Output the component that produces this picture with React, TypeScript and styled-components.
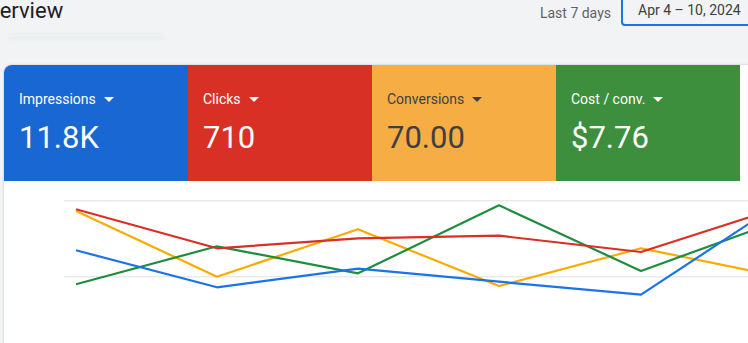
import React from 'react';
import styled, { createGlobalStyle } from 'styled-components';

const GlobalStyle = createGlobalStyle`
  html, body {
    margin: 0;
    padding: 0;
    background: #f1f3f4;
    overflow: hidden;
    font-family: Roboto, "Liberation Sans", Arial, sans-serif;
  }
`;

type Metric = {
  label: string;
  value: string;
  bg: string;
  fg: string;
};

const metrics: Metric[] = [
  { label: 'Impressions', value: '11.8K', bg: '#1967d2', fg: '#ffffff' },
  { label: 'Clicks', value: '710', bg: '#d93025', fg: '#ffffff' },
  { label: 'Conversions', value: '70.00', bg: '#f6ad44', fg: '#3c4043' },
  { label: 'Cost / conv.', value: '$7.76', bg: '#3d8f3e', fg: '#ffffff' },
];

const xs = [72, 213, 354, 495, 637, 778];
const series = [
  { color: '#f9ab00', ys: [30, 95.7, 48.3, 105, 67.3, 95.9] },
  { color: '#1e8e3e', ys: [103.3, 65.3, 92.3, 24.3, 90, 38.7] },
  { color: '#1a73e8', ys: [69.3, 106.3, 87.7, 100.7, 113.7, 20.9] },
  { color: '#d93025', ys: [28.3, 67.3, 57.3, 54.7, 71, 25.8] },
];

export default function App() {
  return (
    <>
      <GlobalStyle />
      <Page>
        <Header>
          <Title>Overview</Title>
          <DateControls>
            <RangeLabel>Last 7 days</RangeLabel>
            <DateButton>Apr 4 – 10, 2024</DateButton>
          </DateControls>
        </Header>
        <TabShadow />
        <Card>
          <Tiles>
            {metrics.map((m) => (
              <Tile key={m.label} bg={m.bg} fg={m.fg}>
                <TileLabel>
                  {m.label}
                  <Caret fg={m.fg} />
                </TileLabel>
                <TileValue>{m.value}</TileValue>
              </Tile>
            ))}
          </Tiles>
          <Chart width="800" height="200" viewBox="0 0 800 200">
            <line x1="60" y1="19.7" x2="800" y2="19.7" stroke="#e8eaed" strokeWidth="1.5" />
            <line x1="60" y1="95.7" x2="800" y2="95.7" stroke="#e8eaed" strokeWidth="1.5" />
            {series.map((s) => (
              <polyline
                key={s.color}
                points={s.ys.map((y, i) => `${xs[i]},${y}`).join(' ')}
                fill="none"
                stroke={s.color}
                strokeWidth="2.2"
                strokeLinejoin="round"
              />
            ))}
          </Chart>
        </Card>
      </Page>
    </>
  );
}

const Page = styled.div`
  display: flex;
  flex-direction: column;
  width: 820px;
  margin-top: -10px;
`;

const Header = styled.div`
  display: flex;
  align-items: flex-end;
  justify-content: space-between;
  height: 36px;
`;

const Title = styled.h1`
  margin: 0 0 2px -26px;
  font-size: 22px;
  font-weight: 400;
  color: #202124;
  line-height: 26px;
`;

const DateControls = styled.div`
  display: flex;
  align-items: center;
  gap: 10px;
  height: 36px;
  padding-left: 100px;
`;

const RangeLabel = styled.span`
  font-size: 14px;
  color: #5f6368;
  padding-top: 10px;
`;

const DateButton = styled.div`
  box-sizing: border-box;
  height: 36px;
  width: 199px;
  padding: 10px 0 0 15px;
  border: 2px solid #1a73e8;
  border-radius: 4px;
  font-size: 14px;
  color: #3c4043;
  background: #f1f3f4;
`;

const TabShadow = styled.div`
  width: 155px;
  height: 1px;
  margin: 9px 0 0 10px;
  box-shadow: 0 1px 5px rgba(60, 64, 67, 0.2);
`;

const Card = styled.div`
  margin: 29px 0 0 4px;
  background: #ffffff;
  border-radius: 8px 0 0 0;
  overflow: hidden;
  box-shadow: 0 0 2px rgba(60, 64, 67, 0.35);
`;

const Tiles = styled.div`
  display: flex;
  width: 736px;
  height: 116px;
`;

const Tile = styled.div<{ bg: string; fg: string }>`
  box-sizing: border-box;
  flex: 1;
  padding: 26px 0 0 15px;
  background: ${({ bg }) => bg};
  color: ${({ fg }) => fg};
`;

const TileLabel = styled.div`
  display: flex;
  align-items: center;
  gap: 8px;
  font-size: 14px;
  line-height: 16px;
`;

const Caret = styled.span<{ fg: string }>`
  width: 0;
  height: 0;
  border-left: 5px solid transparent;
  border-right: 5px solid transparent;
  border-top: 5px solid ${({ fg }) => fg};
`;

const TileValue = styled.div`
  margin-top: 13px;
  font-size: 31px;
  line-height: 36px;
`;

const Chart = styled.svg`
  display: block;
`;
